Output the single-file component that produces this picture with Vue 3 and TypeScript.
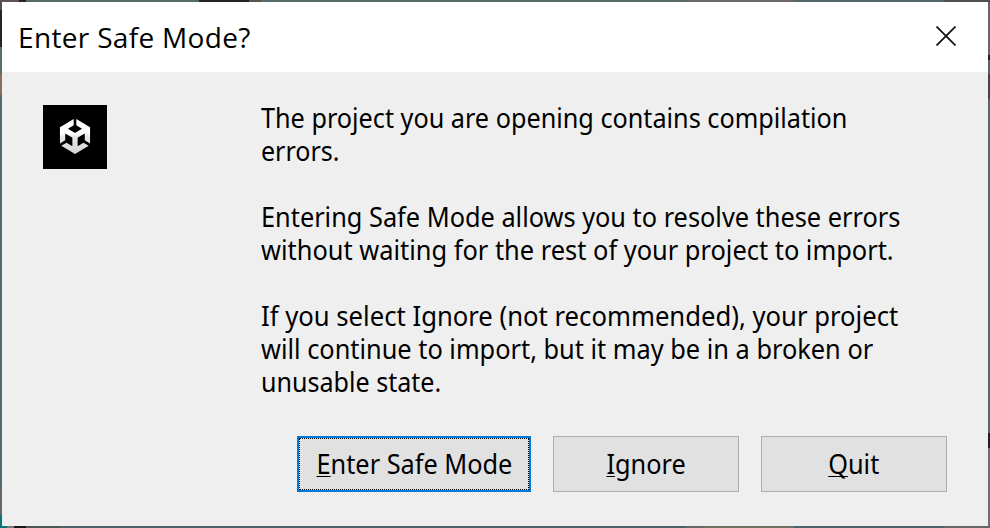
<script setup lang="ts">
interface TextLine {
  text: string
  cls?: string
}

const paragraphs: TextLine[][] = [
  [
    { text: 'The project you are opening contains compilation', cls: 'l1' },
    { text: 'errors.', cls: 'l2' },
  ],
  [
    { text: 'Entering Safe Mode allows you to resolve these errors', cls: 'l3' },
    { text: 'without waiting for the rest of your project to import.', cls: 'l4' },
  ],
  [
    { text: 'If you select Ignore (not recommended), your project', cls: 'l5' },
    { text: 'will continue to import, but it may be in a broken or', cls: 'l6' },
    { text: 'unusable state.', cls: 'l7' },
  ],
]

const buttons = [
  { key: 'E', rest: 'nter Safe Mode', cls: 'primary' },
  { key: 'I', rest: 'gnore', cls: '' },
  { key: 'Q', rest: 'uit', cls: '' },
]
</script>

<template>
  <div class="backdrop">
    <section class="dialog" role="dialog">
      <header class="titlebar">
        <h1 class="title">Enter Safe Mode?</h1>
        <svg class="close" viewBox="0 0 20 20">
          <path d="M0.5 0.5 19.5 19.5M19.5 0.5 0.5 19.5" />
        </svg>
      </header>
      <div class="body">
        <div class="logo">
          <svg viewBox="0 0 24 24" preserveAspectRatio="none">
            <defs>
              <linearGradient id="shade" x1="0" y1="0" x2="0" y2="1">
                <stop offset="0" stop-color="#fff" />
                <stop offset="0.42" stop-color="#fff" />
                <stop offset="0.5" stop-color="#e8e8e8" />
                <stop offset="1" stop-color="#d4d4d4" />
              </linearGradient>
            </defs>
            <path
              fill="url(#shade)"
              d="m12.9288 4.2939 3.7997 2.1929c.1366.077.1415.2905 0 .3675l-4.515 2.6076a.4192.4192 0 0 1-.4246 0L7.274 6.8543c-.139-.0745-.1415-.293 0-.3675l3.7972-2.193V0L1.3758 5.5977V16.793l3.7177-2.1456v-4.3858c-.0025-.1565.1813-.2682.318-.1838l4.5148 2.6076a.4252.4252 0 0 1 .2136.3676v5.2127c.0025.1565-.1813.2682-.3179.1838l-3.7996-2.1929-3.7178 2.1457L12 24l9.6954-5.5977-3.7178-2.1457-3.7996 2.1929c-.1341.082-.3229-.0248-.3179-.1838V13.053c0-.1565.087-.2956.2136-.3676l4.5149-2.6076c.134-.082.3228.0224.3179.1838v4.3858l3.7177 2.1456V5.5977L12.9288 0Z"
            />
          </svg>
        </div>
        <div class="message">
          <p v-for="(lines, i) in paragraphs" :key="i">
            <span v-for="line in lines" :key="line.text" class="line" :class="line.cls">{{ line.text }}</span>
          </p>
        </div>
      </div>
      <footer class="actions">
        <button v-for="b in buttons" :key="b.key" class="btn" :class="b.cls">
          <span class="label"><span class="key">{{ b.key }}</span>{{ b.rest }}</span>
        </button>
      </footer>
    </section>
  </div>
</template>

<style>
body {
  margin: 0;
  overflow: hidden;
}
</style>

<style scoped>
.backdrop {
  box-sizing: border-box;
  width: 990px;
  height: 528px;
  padding: 2px;
  background:
    linear-gradient(90deg, #5d5454 0 19px, #242426 19px 26px, #586b6b 26px 199px, #242426 199px 249px, #5a5548 249px 261px, #586b6b 261px 686px, #6b6767 686px 794px, #536769 794px 944px, #505050 944px) top / 100% 2px no-repeat,
    linear-gradient(90deg, #087672 0 7px, #777 7px 14px, #181818 14px 26px, #4c5656 26px 60px, #4c6267 60px 686px, #666 686px 703px, #6b705f 703px 794px, #4c6267 794px 944px, #666 944px) bottom / 100% 2px no-repeat,
    linear-gradient(#554d4d 0 10px, #242426 10px 47px, #5b6c6c 47px 74px, #8a6f58 74px 95px, #536b70 95px 488px, #666 488px 515px, #087672 515px) left / 2px 100% no-repeat,
    linear-gradient(#666 0 55px, #202020 55px 60px, #52666a 60px 74px, #454545 74px 99px, #536970 99px 433px, #202020 433px 448px, #707070 448px) right / 2px 100% no-repeat;
}

.dialog {
  display: flex;
  flex-direction: column;
  width: 986px;
  height: 524px;
  background: #efefef;
  color: #000;
}

.titlebar {
  box-sizing: border-box;
  display: flex;
  align-items: center;
  justify-content: space-between;
  height: 70px;
  padding: 0 32px 0 16px;
  background: #fff;
}

.title {
  margin: 0 0 1px;
  font: 400 28px/38px "Open Sans", "Noto Sans", sans-serif;
  letter-spacing: 0.33px;
  white-space: nowrap;
}

.close {
  width: 20px;
  height: 20px;
  margin-bottom: 2px;
  fill: none;
  stroke: #111;
  stroke-width: 1.7;
}

.body {
  display: flex;
  gap: 154px;
  height: 364px;
  padding: 0 41px;
  box-sizing: border-box;
}

.logo {
  display: flex;
  flex: none;
  justify-content: center;
  width: 64px;
  height: 64px;
  margin-top: 33px;
  background: #000;
}

.logo svg {
  width: 34px;
  height: 35px;
  margin-top: 14px;
}

.message {
  width: 650px;
  padding-top: 29px;
  font: 400 27.5px/33px "Noto Sans", sans-serif;
}

.message p {
  margin: 0 0 33px;
}

.line {
  display: block;
  width: max-content;
  transform-origin: left;
  white-space: nowrap;
}

.l1 { transform: scaleX(0.917); }
.l2 { transform: scaleX(0.91); }
.l3 { transform: scaleX(0.921); }
.l4 { transform: scaleX(0.924); }
.l5 { transform: scaleX(0.933); }
.l6 { transform: scaleX(0.922); }
.l7 { transform: scaleX(0.912); }

.actions {
  display: flex;
  justify-content: flex-end;
  gap: 22px;
  padding-right: 41px;
}

.btn {
  display: flex;
  align-items: center;
  justify-content: center;
  box-sizing: border-box;
  width: 186px;
  height: 56px;
  padding: 0 0 2px;
  border: 1px solid #adadad;
  border-radius: 0;
  background: #e1e1e1;
  color: #000;
  font: 400 27.5px/33px "Noto Sans", sans-serif;
  white-space: nowrap;
}

.btn.primary {
  width: 234px;
  border: 2px solid #0078d7;
  outline: 1px dotted #000;
  outline-offset: -3px;
}

.label {
  transform: scaleX(0.92);
}

.key {
  text-decoration: underline;
  text-decoration-thickness: 1px;
  text-underline-offset: 2px;
  text-decoration-skip-ink: none;
}
</style>
